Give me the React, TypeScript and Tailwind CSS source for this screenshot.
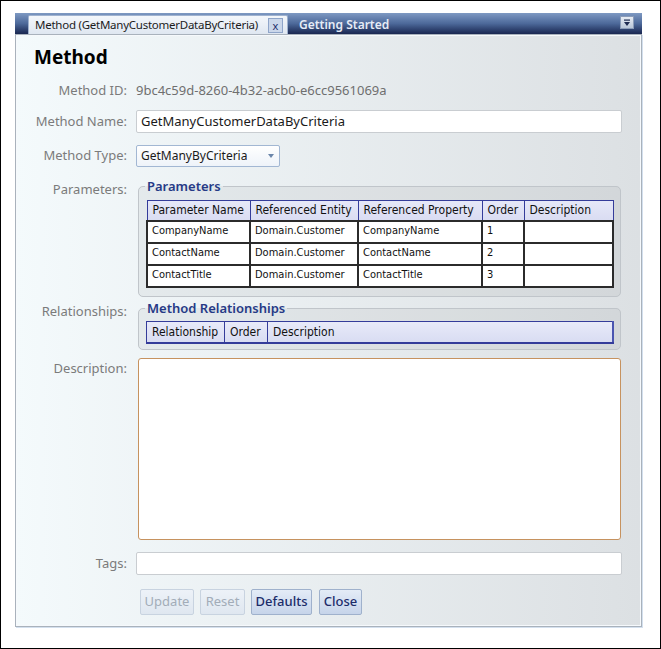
const paramRows = [
  ['CompanyName', 'Domain.Customer', 'CompanyName', '1', ''],
  ['ContactName', 'Domain.Customer', 'ContactName', '2', ''],
  ['ContactTitle', 'Domain.Customer', 'ContactTitle', '3', ''],
]

const Label = ({ children, pt = 'pt-0' }: { children: string; pt?: string }) => (
  <div className={`w-[111px] shrink-0 text-right text-[13px] text-[#7b7b7b] ${pt}`}>{children}</div>
)

const App = () => {
  return (
    <div
      className="w-[661px] h-[649px] border border-black bg-white pt-3 pl-[14px]"
      style={{ fontFamily: '"Noto Sans", "Open Sans", sans-serif' }}
    >
      {/* tab strip */}
      <div className="w-[627px] h-[21px] flex items-end bg-linear-to-b from-[#7e99c2] via-[#4d699a] to-[#1a2751]">
        <div className="ml-[13px] h-[19px] w-[260px] flex items-center pl-[6px] pr-[4px] rounded-t-[2px] border border-b-0 border-[#9fb2cf] bg-linear-to-b from-[#f4f7fb] to-[#dfe7f1]">
          <span className="whitespace-nowrap text-[11.5px] tracking-[-0.25px] text-[#1c1c1c] leading-none">Method (GetManyCustomerDataByCriteria)</span>
          <span className="ml-auto w-[15px] h-[15px] flex items-center justify-center border border-[#8fa5c9] bg-[#cbd7ea] text-[11px] leading-none text-[#1d2d6a]">
            x
          </span>
        </div>
        <div className="ml-[11px] h-[19px] flex items-center whitespace-nowrap text-[12px] font-semibold text-[#e6ecf6]">Getting Started</div>
        <div className="ml-auto mr-[8px] mb-[5px] w-[14px] h-[13px] bg-linear-to-b from-[#e8edf4] to-[#b9c6d8] border border-[#8b9cb8] flex items-center justify-center">
          <svg width="8" height="8" viewBox="0 0 8 8">
            <rect x="1" y="0.5" width="6" height="1.2" fill="#1d2a50" />
            <path d="M1 3 L7 3 L4 7 Z" fill="#1d2a50" />
          </svg>
        </div>
      </div>

      {/* panel */}
      <div className="w-[627px] h-[593px] border border-[#a9b2bc] shadow-[inset_0_0_0_1px_#f6f9fc,1px_1px_0_0_#d4e0ee] bg-linear-to-r from-[#f4fafc] to-[#dce0e3] pr-[19px] flex flex-col">
        <div className="pl-[18px] pt-[9px] h-[36px] text-[19px] font-bold text-black leading-[26px]">Method</div>

        <div className="mt-[9px] h-[22px] flex items-center">
          <Label>Method ID:</Label>
          <div className="ml-[9px] text-[13px] text-[#6f6f6f]">9bc4c59d-8260-4b32-acb0-e6cc9561069a</div>
        </div>

        <div className="mt-[8px] flex items-center">
          <Label>Method Name:</Label>
          <div className="ml-[9px] flex-1 h-[23px] rounded-[2px] border border-[#c9cdd1] bg-white pl-[4px] flex items-center text-[13px] text-[#1a1a1a]">
            GetManyCustomerDataByCriteria
          </div>
        </div>

        <div className="mt-[12px] flex items-center">
          <Label>Method Type:</Label>
          <div className="ml-[9px] w-[144px] h-[22px] rounded-[2px] border border-[#a2b7d3] bg-linear-to-b from-white to-[#eef3f9] pl-[4px] pr-[5px] flex items-center text-[12px] text-[#1a1a1a]">
            GetManyByCriteria
            <svg className="ml-auto" width="6" height="4" viewBox="0 0 6 4">
              <path d="M0 0 L6 0 L3 4 Z" fill="#6b86aa" />
            </svg>
          </div>
        </div>

        <div className="mt-[11px] flex items-start">
          <Label pt="pt-[2px]">Parameters:</Label>
          <fieldset className="ml-[11px] mr-[1px] flex-1 h-[119px] rounded-[5px] border border-[#c0c5ca] bg-black/[0.045] pl-[7px] pt-[6px]">
            <legend className="ml-[-1px] px-[2px] text-[13px] font-semibold text-[#263a86] leading-[16px]">Parameters</legend>
            <table className="border-collapse text-[11px] text-[#111]" style={{ fontFamily: '"DejaVu Sans Condensed", "DejaVu Sans", sans-serif' }}>
              <thead>
                <tr className="h-[20px] bg-linear-to-b from-[#e6e8f8] to-[#d9dcf2]">
                  <th className="w-[103px] border border-[#343c9a] px-[5px] text-left font-normal text-[12px]">Parameter Name</th>
                  <th className="w-[108px] border border-[#343c9a] px-[5px] text-left font-normal text-[12px]">Referenced Entity</th>
                  <th className="w-[124px] border border-[#343c9a] px-[5px] text-left font-normal text-[12px]">Referenced Property</th>
                  <th className="w-[42px] border border-[#343c9a] px-[5px] text-left font-normal text-[12px]">Order</th>
                  <th className="w-[89px] border border-[#343c9a] px-[5px] text-left font-normal text-[12px]">Description</th>
                </tr>
              </thead>
              <tbody>
                {paramRows.map((r) => (
                  <tr key={r[0]} className="h-[22px] bg-white">
                    {r.map((c, i) => (
                      <td key={i} className="border-2 border-[#2b2b2b] px-[4px] pb-[3px] align-middle leading-none">
                        {c}
                      </td>
                    ))}
                  </tr>
                ))}
              </tbody>
            </table>
          </fieldset>
        </div>

        <div className="mt-[3px] flex items-start">
          <Label pt="pt-[2px]">Relationships:</Label>
          <fieldset className="ml-[11px] mr-[1px] flex-1 h-[50px] rounded-[5px] border border-[#c0c5ca] bg-black/[0.045] pl-[7px] pt-[5px]">
            <legend className="ml-[-1px] px-[2px] text-[13px] font-semibold text-[#263a86] leading-[16px]">Method Relationships</legend>
            <table className="border-collapse text-[12px] text-[#111]" style={{ fontFamily: '"DejaVu Sans Condensed", "DejaVu Sans", sans-serif' }}>
              <thead>
                <tr className="h-[21px] bg-linear-to-b from-[#e8eaf9] to-[#d8dcf2]">
                  <th className="w-[78px] border border-[#343c9a] border-b-2 px-[5px] text-left font-normal">Relationship</th>
                  <th className="w-[43px] border border-[#343c9a] border-b-2 px-[5px] text-left font-normal">Order</th>
                  <th className="w-[345px] border border-[#343c9a] border-b-2 border-r-2 border-r-[#4a55b0] px-[5px] text-left font-normal">Description</th>
                </tr>
              </thead>
            </table>
          </fieldset>
        </div>

        <div className="mt-[8px] flex items-start">
          <Label pt="pt-[1px]">Description:</Label>
          <div className="ml-[11px] mr-[1px] flex-1 h-[182px] rounded-[3px] border border-[#c6925f] bg-white" />
        </div>

        <div className="mt-[12px] flex items-center">
          <Label>Tags:</Label>
          <div className="ml-[9px] flex-1 h-[23px] rounded-[2px] border border-[#c9cdd1] bg-white" />
        </div>

        <div className="mt-[14px] ml-[124px] flex gap-[6px] text-[13px]">
          <div className="h-[26px] w-[54px] flex items-center justify-center rounded-[2px] border border-[#c8d3e0] bg-linear-to-b from-[#edf2f8] to-[#dfe7f0] text-[#a2acb8]">Update</div>
          <div className="h-[26px] w-[45px] flex items-center justify-center rounded-[2px] border border-[#c8d3e0] bg-linear-to-b from-[#edf2f8] to-[#dfe7f0] text-[#a2acb8]">Reset</div>
          <div className="h-[26px] w-[61px] flex items-center justify-center rounded-[2px] border border-[#9fb1cc] bg-linear-to-b from-[#e4ecf7] to-[#c6d4ea] font-medium text-[#1c2c6a]">Defaults</div>
          <div className="ml-[1px] h-[26px] w-[43px] flex items-center justify-center rounded-[2px] border border-[#9fb1cc] bg-linear-to-b from-[#e4ecf7] to-[#c6d4ea] font-medium text-[#1c2c6a]">Close</div>
        </div>
      </div>
    </div>
  )
}

export default App
